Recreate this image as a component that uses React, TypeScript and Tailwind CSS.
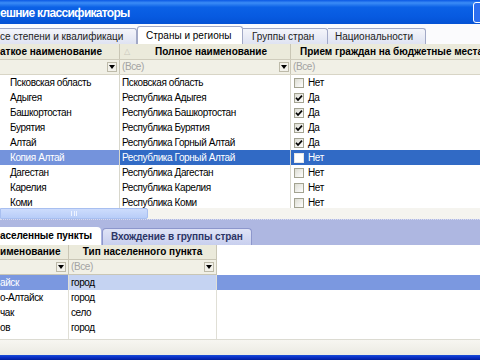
import React from "react";

type Row = { short: string; full: string; on: boolean; sel?: boolean };

const regions: Row[] = [
  { short: "Псковская область", full: "Псковская область", on: false },
  { short: "Адыгея", full: "Республика Адыгея", on: true },
  { short: "Башкортостан", full: "Республика Башкортостан", on: true },
  { short: "Бурятия", full: "Республика Бурятия", on: true },
  { short: "Алтай", full: "Республика Горный Алтай", on: true },
  { short: "Копия Алтай", full: "Республика Горный Алтай", on: false, sel: true },
  { short: "Дагестан", full: "Республика Дагестан", on: false },
  { short: "Карелия", full: "Республика Карелия", on: false },
  { short: "Коми", full: "Республика Коми", on: false },
];

const places = [
  { name: "айск", type: "город", sel: true },
  { name: "о-Алтайск", type: "город" },
  { name: "чак", type: "село" },
  { name: "ов", type: "город" },
];

function Check({ on, sel }: { on: boolean; sel?: boolean }) {
  return (
    <span
      className={`w-[10px] h-[10px] border flex items-center justify-center ${
        sel ? "border-[#e8e8e8] bg-white" : "border-[#a3a391] bg-[linear-gradient(135deg,#dcdcd2,#ffffff)]"
      }`}
    >
      {on && (
        <svg width="8" height="8" viewBox="0 0 8 8">
          <path d="M1 3.8 L3 6 L7 1.6" stroke="#000" strokeWidth="1.7" fill="none" />
        </svg>
      )}
    </span>
  );
}

function DropBtn() {
  return (
    <span className="w-[10px] h-[10px] bg-[#f2f1ea] border border-[#bdbaa9] flex items-center justify-center">
      <span className="border-x-[3px] border-x-transparent border-t-[4px] border-t-black" />
    </span>
  );
}

export default function App() {
  return (
    <div className="w-[480px] h-[360px] overflow-hidden flex flex-col bg-[#f0efe8] font-['Tahoma','Liberation_Sans',sans-serif] text-[10px] tracking-[-0.4px] text-black leading-none">
      {/* title bar */}
      <div className="h-[24px] flex items-center justify-between bg-[linear-gradient(#0a58e4_0%,#3b8cf6_12%,#0b61e6_30%,#075ae0_70%,#0552d4_100%)]">
        <span className="text-white font-bold text-[12px] tracking-[-0.7px] pt-[1px] whitespace-nowrap">ешние классификаторы</span>
        <span className="w-[21px] h-[21px] -mr-[14px] rounded-[3px] border border-white bg-[#2d6ff0]" />
      </div>

      {/* top tabs */}
      <div className="h-[20px] flex items-end bg-[#fbfbfd] tracking-normal whitespace-nowrap">
        <div className="w-[137px] h-[16px] flex items-center bg-[linear-gradient(#f4f5fa,#dfe3f2)] border-t border-r border-[#a2a9c6] rounded-tr-[3px] text-[#222]">
          се степени и квалификаци
        </div>
        <div className="w-[106px] h-[18px] flex items-center pl-[8px] bg-white border-t border-x border-[#a2a9c6] rounded-t-[3px]">
          Страны и регионы
        </div>
        <div className="w-[85px] h-[16px] flex items-center pl-[9px] bg-[linear-gradient(#f4f5fa,#dfe3f2)] border-t border-r border-[#a2a9c6] rounded-tr-[3px] text-[#222]">
          Группы стран
        </div>
        <div className="w-[98px] h-[16px] flex items-center pl-[7px] bg-[linear-gradient(#f4f5fa,#dfe3f2)] border-t border-r border-[#a2a9c6] rounded-tr-[3px] text-[#222]">
          Национальности
        </div>
      </div>

      {/* top grid header */}
      <div className="h-[16px] flex bg-[#ebeadb] border-b border-[#cfccbc] font-bold tracking-normal whitespace-nowrap">
        <div className="w-[120px] flex items-center border-r border-[#c9c6b5] overflow-hidden">
          аткое наименование
        </div>
        <div className="w-[171px] flex items-center border-r border-[#c9c6b5]">
          <span className="pl-[4px] pr-[25px] text-[#c9c7bb] font-normal text-[8px]">△</span>
          Полное наименование
        </div>
        <div className="flex-1 flex items-center pl-[9px] overflow-hidden">
          Прием граждан на бюджетные места
        </div>
      </div>
      {/* filter row */}
      <div className="h-[15px] flex bg-[#f1f0e6] border-b border-[#d8d5c6]">
        <div className="w-[120px] flex items-center justify-end pr-[2px] border-r border-[#c9c6b5]">
          <DropBtn />
        </div>
        <div className="w-[171px] flex items-center justify-between pl-[2px] pr-[1px] border-r border-[#c9c6b5] text-[#a3a3a3]">
          (Все)
          <DropBtn />
        </div>
        <div className="flex-1 flex items-center pl-[2px] text-[#a3a3a3]">(Все)</div>
      </div>

      {/* top grid rows */}
      <div className="h-[133px] overflow-hidden bg-white">
        {regions.map((r, i) => (
          <div key={i} className="h-[15px] flex whitespace-nowrap">
            <div
              className={`w-[120px] flex items-center pl-[10px] border-r border-[#d8d7cc] ${
                r.sel ? "bg-[#7493dc] text-white" : ""
              }`}
            >
              {r.short}
            </div>
            <div
              className={`w-[171px] flex items-center pl-[2px] border-r border-[#d8d7cc] ${
                r.sel ? "bg-[#316ac5] text-white" : ""
              }`}
            >
              {r.full}
            </div>
            <div
              className={`flex-1 flex items-center gap-[4px] pl-[3px] ${
                r.sel ? "bg-[#316ac5] text-white" : ""
              }`}
            >
              <Check on={r.on} sel={r.sel} />
              {r.on ? "Да" : "Нет"}
            </div>
          </div>
        ))}
      </div>

      {/* horizontal scrollbar */}
      <div className="h-[11px] flex bg-[#f5f4ef]">
        <div className="w-[148px] flex items-center justify-center bg-[linear-gradient(#cddcfc,#b8cdf8)] border border-[#a8bff0] rounded-r-[2px]">
          <span className="w-[6px] h-[5px] border-x border-[#eef3ff] flex justify-center">
            <span className="w-[1px] h-full bg-[#eef3ff]" />
          </span>
        </div>
        <div className="flex-1" />
      </div>

      {/* splitter */}
      <div className="h-[3px] bg-[#aeb7e1] border-t border-dotted border-[#d6dbf1]" />

      {/* bottom tabs */}
      <div className="h-[23px] flex items-end bg-[#aeb7e1] font-bold tracking-[-0.1px] whitespace-nowrap">
        <div className="w-[101px] h-[18px] flex items-center bg-white rounded-tr-[4px]">
          аселенные пункты
        </div>
        <div className="w-[150px] h-[17px] ml-[1px] flex items-center pl-[8px] bg-[linear-gradient(#dfe3f6,#c8cfee)] border-t border-x border-[#8d97cc] rounded-t-[4px] text-[#2c3566] overflow-hidden">
          Вхождение в группы стран
        </div>
      </div>

      {/* bottom grid header */}
      <div className="h-[15px] flex bg-white font-bold tracking-normal whitespace-nowrap">
        <div className="w-[69px] flex items-center bg-[#ebeadb] border-r border-b border-[#c9c6b5]">
          именование
        </div>
        <div className="w-[148px] flex items-center justify-center bg-[#ebeadb] border-r border-b border-[#c9c6b5]">
          Тип населенного пункта
        </div>
        <div className="flex-1" />
      </div>
      <div className="h-[15px] flex bg-white">
        <div className="w-[69px] flex items-center justify-end pr-[2px] bg-[#f1f0e6] border-r border-b border-[#c9c6b5]">
          <DropBtn />
        </div>
        <div className="w-[148px] flex items-center justify-between pl-[2px] pr-[2px] bg-[#f1f0e6] border-r border-b border-[#c9c6b5] text-[#a3a3a3]">
          (Все)
          <DropBtn />
        </div>
        <div className="flex-1" />
      </div>

      {/* bottom grid rows */}
      <div className="h-[65px] bg-white border-b border-[#dcdbd2] flex flex-col">
        {places.map((p, i) => (
          <div key={i} className={`h-[15px] flex whitespace-nowrap ${p.sel ? "bg-[#7b98e0]" : ""}`}>
            <div
              className={`w-[69px] flex items-center border-r border-[#e0dfd6] ${
                p.sel ? "text-white" : ""
              }`}
            >
              {p.name}
            </div>
            <div
              className={`w-[148px] flex items-center pl-[2px] border-r border-[#e0dfd6] ${
                p.sel ? "bg-[#c5d3f2]" : ""
              }`}
            >
              {p.type}
            </div>
            <div className="flex-1" />
          </div>
        ))}
        <div className="flex-1 flex">
          <div className="w-[69px] border-r border-[#e0dfd6]" />
          <div className="w-[148px] border-r border-[#e0dfd6]" />
        </div>
      </div>

      <div className="flex-1 bg-[linear-gradient(#f7f6f1,#ecebe3)]" />
      <div className="h-[5px] bg-[linear-gradient(#1a4fd8,#0a2ec4,#001f9a)]" />
    </div>
  );
}
